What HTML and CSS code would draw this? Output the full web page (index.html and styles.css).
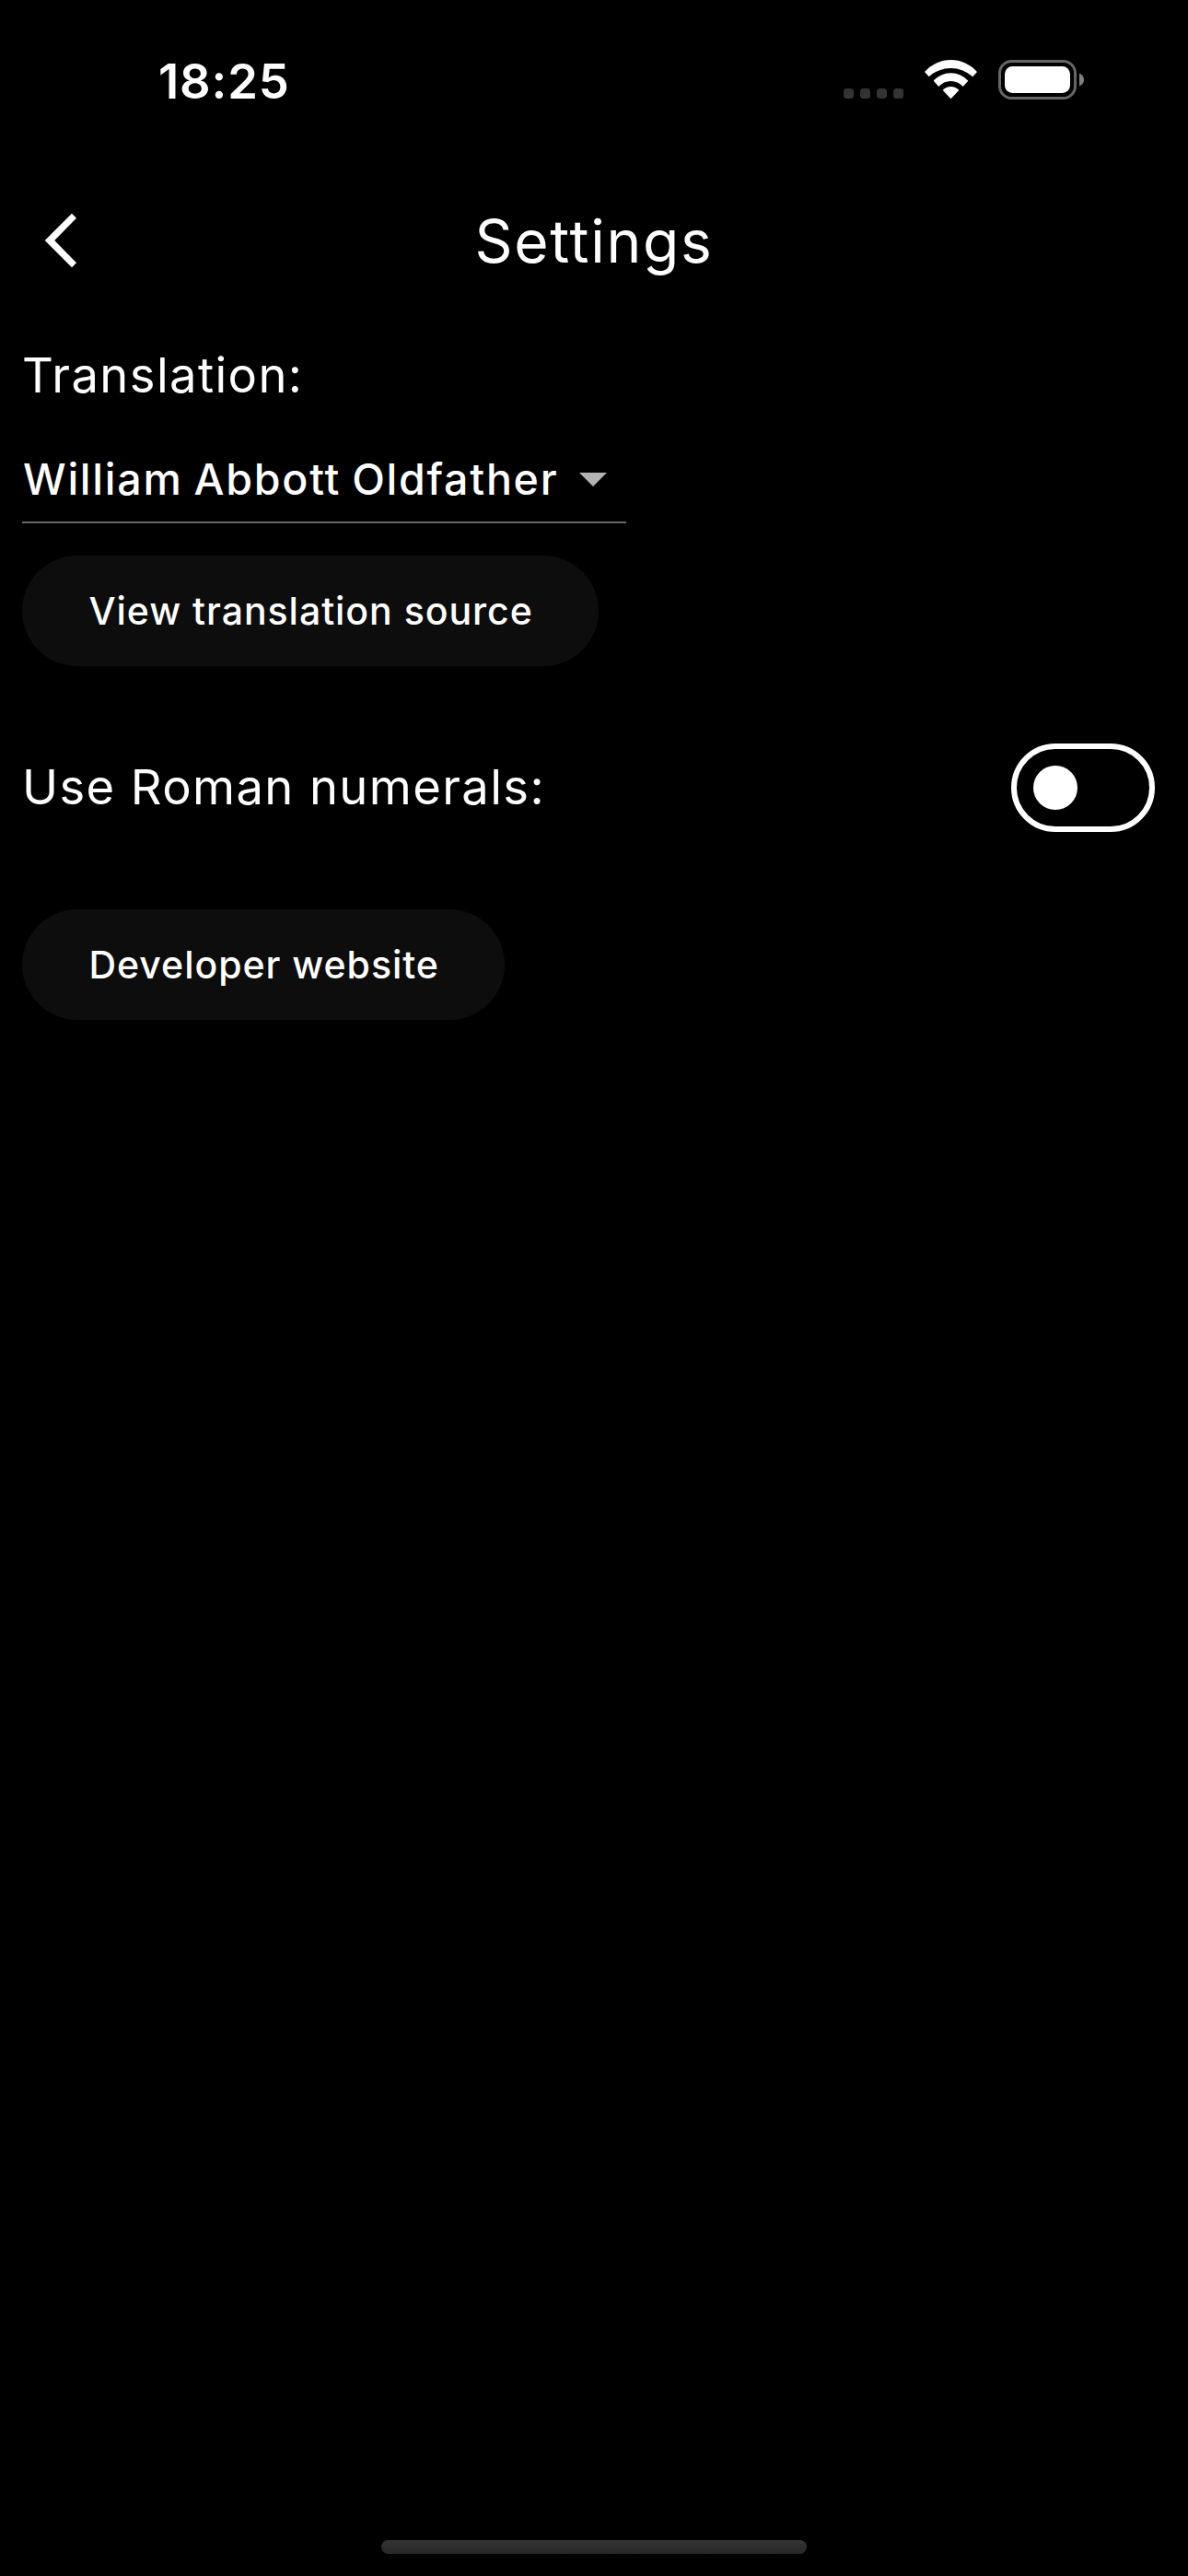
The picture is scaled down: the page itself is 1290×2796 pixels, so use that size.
FILE: index.html
```html
<!DOCTYPE html>
<html lang="en">
<head>
<meta charset="utf-8">
<title>Settings</title>
<link rel="stylesheet" href="styles.css">
</head>
<body>
<div class="screen">
  <div class="status-bar">
    <span class="time">18:25</span>
    <div class="indicators">
      <div class="signal"><i class="dot"></i><i class="dot"></i><i class="dot"></i><i class="dot"></i></div>
      <svg class="wifi" width="59" height="45" viewBox="0 0 59 45" fill="#fff">
        <path d="M1 14A37.7 37.7 0 0 1 58 14L53.3 19.3A35 35 0 0 0 5.7 19.3Z"/>
        <path d="M10.7 23.7A25.2 25.2 0 0 1 48.3 23.7L42.7 30A17.5 17.5 0 0 0 16.3 30Z"/>
        <path d="M20.7 34A11.7 11.7 0 0 1 38.3 34L29.5 43.3Z"/>
      </svg>
      <svg class="battery" width="94" height="45" viewBox="0 0 94 45">
        <rect x="1.5" y="2.5" width="82" height="40" rx="13" fill="none" stroke="#666" stroke-width="3"/>
        <rect x="7" y="8" width="71" height="29" rx="8.5" fill="#fff"/>
        <path d="M88 15.5C91.2 16.8 93 19.5 93 22.5S91.2 28.2 88 29.5Z" fill="#808080"/>
      </svg>
    </div>
  </div>

  <header class="app-bar">
    <button class="back" aria-label="Back">
      <svg width="36" height="60" viewBox="0 0 36 60" fill="#fff"><path d="M30 .7L35 5.7L11.2 30L35 54.3L30 59.3L.7 30Z"/></svg>
    </button>
    <h1 class="title">Settings</h1>
  </header>

  <main class="content">
    <div class="label section-label">Translation:</div>
    <div class="dropdown">
      <span class="dropdown-value">William Abbott Oldfather</span>
      <svg class="caret" width="30" height="15" viewBox="0 0 30 15" fill="#b3b3b3"><path d="M0 0H30L15 15Z"/></svg>
    </div>
    <button class="pill source">View translation source</button>
    <div class="switch-row">
      <span class="label switch-label">Use Roman numerals:</span>
      <div class="switch" role="switch" aria-checked="false"><span class="knob"></span></div>
    </div>
    <button class="pill website">Developer website</button>
  </main>

  <div class="home-indicator"></div>
</div>
</body>
</html>
```
FILE: styles.css
```css
* {
  box-sizing: border-box;
}

body {
  margin: 0;
  background: #000;
  color: #fff;
  font-family: Inter, "Liberation Sans", sans-serif;
}

.screen {
  display: flex;
  flex-direction: column;
  width: 1290px;
  height: 2796px;
  background: #000;
}

.status-bar {
  display: flex;
  justify-content: space-between;
  align-items: center;
  height: 176px;
  padding: 0 112px 0 172px;
}

.time {
  font-size: 52.5px;
  font-weight: 600;
  line-height: 64px;
  letter-spacing: 0.9px;
}

.indicators {
  display: flex;
  align-items: center;
  margin-top: -3px;
}

.signal {
  display: flex;
  gap: 7px;
  margin: 30px 22px 0 0;
}

.dot {
  width: 11px;
  height: 11px;
  border-radius: 3.5px;
  background: #333;
}

.wifi {
  margin-right: 22px;
}

.app-bar {
  display: grid;
  grid-template-columns: 200px 1fr 200px;
  align-items: center;
  height: 172px;
}

.back {
  display: flex;
  justify-self: start;
  margin: -2px 0 0 48px;
  padding: 0;
  border: 0;
  background: none;
}

.title {
  margin: 0;
  font-size: 64px;
  font-weight: 400;
  line-height: 80px;
  letter-spacing: 1.75px;
  text-align: center;
}

.content {
  display: flex;
  flex: 1;
  flex-direction: column;
  align-items: flex-start;
  padding: 0 36px 0 24px;
}

.label {
  font-size: 52.5px;
  line-height: 64px;
  letter-spacing: 1.4px;
}

.section-label {
  padding: 27px 0;
}

.dropdown {
  display: flex;
  justify-content: space-between;
  align-items: center;
  width: 656px;
  height: 102px;
  padding: 8px 21px 0 1px;
  border-bottom: 2px solid #666;
}

.dropdown-value {
  font-size: 46.5px;
  font-weight: 500;
  line-height: 60px;
  letter-spacing: 1.75px;
  word-spacing: -2px;
  white-space: nowrap;
}

.pill {
  height: 120px;
  padding: 0 0 0 72.5px;
  border: 0;
  border-radius: 60px;
  background: #0d0d0d;
  color: #fff;
  font: 500 41px/60px Inter, "Liberation Sans", sans-serif;
  letter-spacing: 0.97px;
  text-align: left;
  white-space: nowrap;
}

.source {
  width: 626px;
  margin-top: 35px;
}

.website {
  width: 524px;
}

.switch-row {
  display: flex;
  justify-content: space-between;
  align-items: center;
  align-self: stretch;
  height: 96px;
  margin: 84px 0;
}

.switch-label {
  padding-bottom: 2px;
}

.switch {
  display: flex;
  align-items: center;
  width: 156px;
  height: 96px;
  padding-left: 18px;
  border: 6px solid #fff;
  border-radius: 48px;
}

.knob {
  width: 48px;
  height: 48px;
  border-radius: 50%;
  background: #fff;
}

.home-indicator {
  align-self: center;
  width: 462px;
  height: 15px;
  margin-bottom: 24px;
  border-radius: 7.5px;
  background: linear-gradient(#343434, #282828);
}
```
